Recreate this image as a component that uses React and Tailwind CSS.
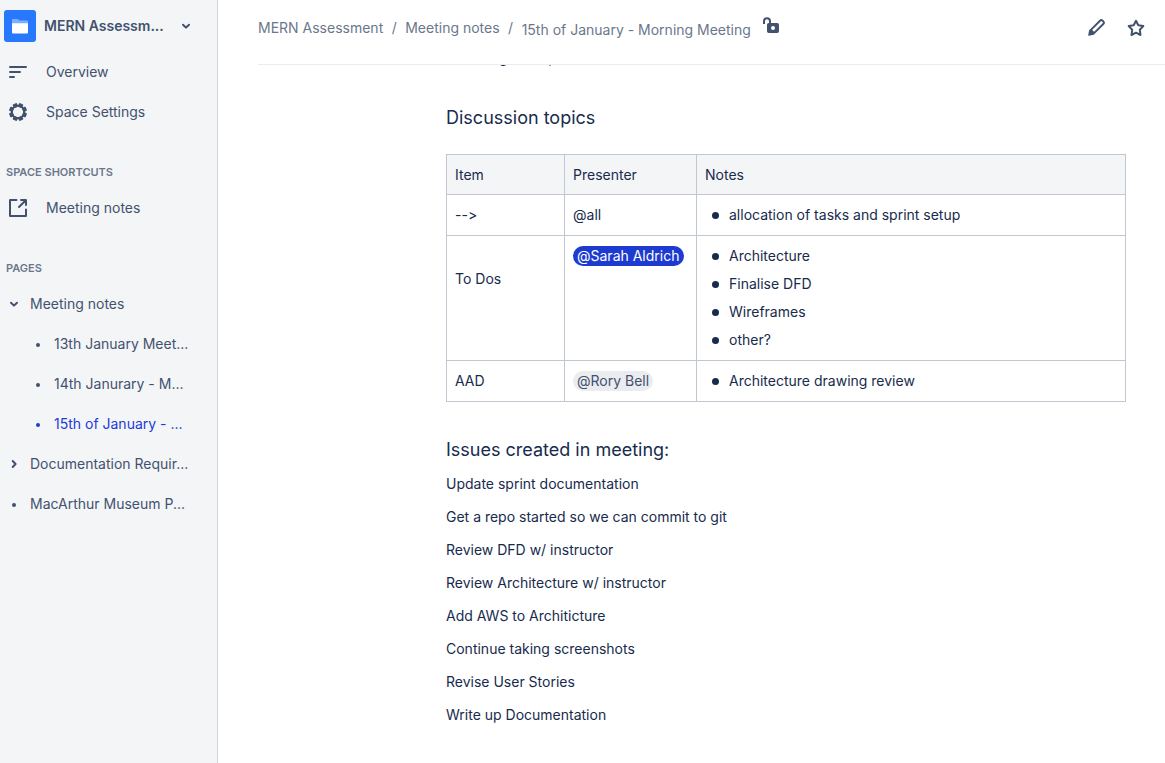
const ink = 'text-[#42526e]'

function NavIcon({ children }) {
  return (
    <svg viewBox="0 0 24 24" className="size-6 shrink-0" fill="none" stroke="currentColor" strokeWidth="2" strokeLinecap="round" strokeLinejoin="round" aria-hidden="true">
      {children}
    </svg>
  )
}

function Chevron({ className = '' }) {
  return (
    <svg viewBox="0 0 16 16" className={`size-4 shrink-0 ${className}`} fill="none" stroke="currentColor" strokeWidth="2" strokeLinecap="round" strokeLinejoin="round" aria-hidden="true">
      <path d="M5 6.700 8 9.600l3-2.900" />
    </svg>
  )
}

function Dot() {
  return (
    <svg viewBox="0 0 16 16" className="size-4 shrink-0" aria-hidden="true">
      <circle cx="8" cy="9" r="2" fill="currentColor" />
    </svg>
  )
}

function NavLink({ icon, children }) {
  return (
    <a href="#" className="flex h-10 items-center gap-4 pl-1.5">
      {icon}
      <span>{children}</span>
    </a>
  )
}

const gearAngles = [22.5, 67.5, 112.5, 157.5, 202.5, 247.5, 292.5, 337.5]

const pages = [
  { label: 'Meeting notes', open: true },
  { label: '13th January Meet...', child: true },
  { label: '14th Janurary - M...', child: true },
  { label: '15th of January - ...', child: true, active: true },
  { label: 'Documentation Requir...', closed: true },
  { label: 'MacArthur Museum P...' },
]

function PageLink({ page }) {
  return (
    <li>
      <a
        href="#"
        aria-current={page.active ? 'page' : undefined}
        className={`flex h-10 items-center gap-2 whitespace-nowrap ${page.child ? 'pl-[30px]' : 'pl-1.5'} ${page.active ? 'text-[#1d3bd8]' : ''}`}
      >
        {page.open ? <Chevron /> : page.closed ? <Chevron className="-rotate-90" /> : <Dot />}
        <span>{page.label}</span>
      </a>
    </li>
  )
}

function SectionTitle({ children }) {
  return <h2 className="mb-[7px] mt-[33px] flex h-4 items-center pl-1.5 text-[11px] font-semibold text-[#6b778c]">{children}</h2>
}

function Sidebar() {
  return (
    <nav className={`w-[218px] shrink-0 border-r border-[#d3d5da] bg-[#f4f5f7] text-sm ${ink}`}>
      <button type="button" className="flex h-[52px] w-full items-center gap-2 pl-1 text-left">
        <span className="flex size-8 items-center justify-center rounded-[3px] bg-[#2878fe]">
          <svg viewBox="0 0 32 32" className="size-8" aria-hidden="true">
            <path d="M8 10a1 1 0 0 1 1-1h4.500l2 1.500H23a1 1 0 0 1 1 1V15H8z" fill="#7eaefe" />
            <path d="M8 13.200h16V22.500a1 1 0 0 1-1 1H9a1 1 0 0 1-1-1z" fill="#fff" />
          </svg>
        </span>
        <span className="w-[126px] whitespace-nowrap font-semibold">MERN Assessm...</span>
        <Chevron />
      </button>
      <NavLink
        icon={
          <NavIcon>
            <path d="M4 7h16M4 12h10M4 17h4" />
          </NavIcon>
        }
      >
        Overview
      </NavLink>
      <NavLink
        icon={
          <NavIcon>
            <circle cx="12" cy="12" r="6.200" />
            {gearAngles.map((angle) => (
              <rect key={angle} x="-2.300" y="-9" width="4.600" height="4" rx="1" fill="currentColor" stroke="none" transform={`translate(12 12) rotate(${angle})`} />
            ))}
          </NavIcon>
        }
      >
        Space Settings
      </NavLink>
      <SectionTitle>SPACE SHORTCUTS</SectionTitle>
      <NavLink
        icon={
          <NavIcon>
            <path d="M10.500 4H4v16h16v-6.500M13 11l6.500-6.500M15 4h5v5" />
          </NavIcon>
        }
      >
        Meeting notes
      </NavLink>
      <SectionTitle>PAGES</SectionTitle>
      <ul>
        {pages.map((page) => (
          <PageLink key={page.label} page={page} />
        ))}
      </ul>
    </nav>
  )
}

function Header() {
  return (
    <header className="ml-10 flex h-[65px] shrink-0 items-start border-b border-[#ebecf0] pr-[17px] text-sm text-[#6b778c]">
      <ol className="flex items-start whitespace-nowrap pt-[18px] leading-5">
        <li>
          <a href="#">MERN Assessment</a>
        </li>
        <li className="w-[22px] text-center" aria-hidden="true">/</li>
        <li>
          <a href="#">Meeting notes</a>
        </li>
        <li className="w-[22px] text-center" aria-hidden="true">/</li>
        <li className="pt-0.5">
          <a href="#">15th of January - Morning Meeting</a>
        </li>
      </ol>
      <button type="button" aria-label="Restrictions" className={`ml-2 mt-3.5 ${ink}`}>
        <svg viewBox="0 0 24 24" className="size-6" aria-hidden="true">
          <path d="M5 10V7.200a3 3 0 0 1 6 0V9" fill="none" stroke="currentColor" strokeWidth="2" />
          <path fillRule="evenodd" d="M9.800 9h8.400A1.800 1.800 0 0 1 20 10.800v6.400a1.800 1.800 0 0 1-1.800 1.800H9.800A1.800 1.800 0 0 1 8 17.200v-6.400A1.800 1.800 0 0 1 9.800 9zm4.200 3a2 2 0 1 0 0 4 2 2 0 0 0 0-4z" fill="currentColor" />
        </svg>
      </button>
      <div className={`ml-auto flex gap-4 pt-4 ${ink}`}>
        <button type="button" aria-label="Edit">
          <NavIcon>
            <g transform="rotate(45 12 12)">
              <path d="M9.700 17V4a1.800 1.800 0 0 1 1.800-1.800h1A1.800 1.800 0 0 1 14.300 4v13z" strokeWidth="1.900" />
              <path d="M8.800 17h6.400v1.500L12.500 22.500a.6.600 0 0 1-1 0L8.800 18.500z" fill="currentColor" stroke="none" />
            </g>
          </NavIcon>
        </button>
        <button type="button" aria-label="Star">
          <NavIcon>
            <path d="m12 4.800 2.300 4.500 5 .8-3.500 3.700.7 5.200-4.500-2.300L7.500 19l.7-5.200-3.500-3.700 5-.8z" />
          </NavIcon>
        </button>
      </div>
    </header>
  )
}

function Notes({ items }) {
  return (
    <ul className="flex flex-col gap-2">
      {items.map((item) => (
        <li key={item} className="flex items-center gap-2.5">
          <span className="ml-[7px] size-[7px] rounded-full bg-[#172b4d]" />
          <span>{item}</span>
        </li>
      ))}
    </ul>
  )
}

function Mention({ self, children }) {
  return (
    <a href="#" className={`block w-fit whitespace-nowrap rounded-full px-1 ${self ? 'bg-[#1d3bd1] text-white' : 'bg-[#ebecf0] text-[#42526e]'}`}>
      {children}
    </a>
  )
}

const issues = [
  'Update sprint documentation',
  'Get a repo started so we can commit to git',
  'Review DFD w/ instructor',
  'Review Architecture w/ instructor',
  'Add AWS to Architicture',
  'Continue taking screenshots',
  'Revise User Stories',
  'Write up Documentation',
]

const head = 'border border-[#c1c7d0] px-2 pb-[9px] pt-2.5 font-normal'
const cell = 'border border-[#c1c7d0] px-2 py-2.5 align-top'

export default function App() {
  return (
    <div className="flex min-h-screen bg-white font-['Inter','Liberation_Sans',sans-serif] [font-feature-settings:'calt'_0]">
      <Sidebar />
      <div className="flex min-w-0 flex-1 flex-col">
        <Header />
        <main className="overflow-hidden pl-[228px] pr-[39px] text-sm leading-5 text-[#172b4d]">
          <article className="max-w-[680px]">
            <ul className="-mt-[17px] pl-6">
              <li>Design setup</li>
            </ul>
            <h2 className="mt-9 text-lg leading-7">Discussion topics</h2>
            <table className="mt-[22px] w-full table-fixed border-collapse">
              <colgroup>
                <col className="w-[118px]" />
                <col className="w-[132px]" />
                <col />
              </colgroup>
              <thead>
                <tr className="bg-[#f4f5f7] text-left">
                  <th className={head}>Item</th>
                  <th className={head}>Presenter</th>
                  <th className={head}>Notes</th>
                </tr>
              </thead>
              <tbody>
                <tr>
                  <td className={cell}>--&gt;</td>
                  <td className={cell}>@all</td>
                  <td className={cell}><Notes items={['allocation of tasks and sprint setup']} /></td>
                </tr>
                <tr>
                  <td className={cell}><p className="mt-[23px]">To Dos</p></td>
                  <td className={cell}><Mention self>@Sarah Aldrich</Mention></td>
                  <td className={cell}><Notes items={['Architecture', 'Finalise DFD', 'Wireframes', 'other?']} /></td>
                </tr>
                <tr>
                  <td className={cell}>AAD</td>
                  <td className={cell}><Mention>@Rory Bell</Mention></td>
                  <td className={cell}><Notes items={['Architecture drawing review']} /></td>
                </tr>
              </tbody>
            </table>
            <h2 className="mt-[34px] text-lg leading-7">Issues created in meeting:</h2>
            <div className="mt-2.5 flex flex-col gap-[13px] pb-9">
              {issues.map((issue) => (
                <p key={issue}>{issue}</p>
              ))}
            </div>
          </article>
        </main>
      </div>
    </div>
  )
}
